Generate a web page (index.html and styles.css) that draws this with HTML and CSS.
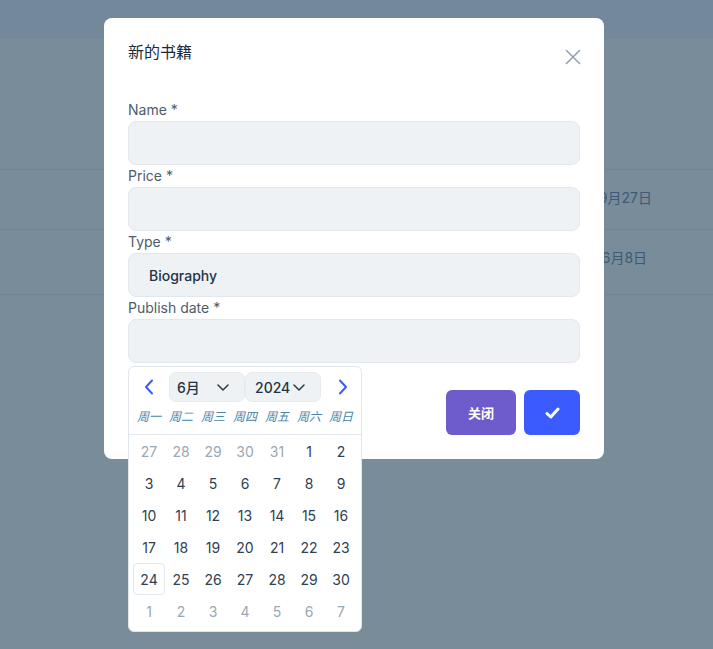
FILE: index.html
```html
<!DOCTYPE html>
<html lang="zh">
<head>
    <meta charset="UTF-8">
    <meta name="viewport" content="width=device-width, initial-scale=1.0">
    <title>新的书籍</title>
    <link rel="stylesheet" href="styles.css">
</head>
<body>

<!-- ===== PAGE BEHIND THE MODAL (dimmed) ===== -->
<div class="page">
    <div class="topbar"></div>
    <div class="book-table">
        <div class="book-row book-head"></div>
        <div class="book-row"><span class="book-date">2019年9月27日</span></div>
        <div class="book-row tall"><span class="book-date">2024年6月8日</span></div>
    </div>
</div>

<!-- ===== NEW BOOK MODAL ===== -->
<div class="modal">
    <div class="modal-card">
        <div class="modal-head">
            <h2 class="modal-title">新的书籍</h2>
            <button class="close-btn" aria-label="close">
                <svg width="16" height="16" viewBox="0 0 16 16"><path d="M1.5 1.5 L14.5 14.5 M14.5 1.5 L1.5 14.5" stroke="#93a2ae" stroke-width="1.6" fill="none" stroke-linecap="round"/></svg>
            </button>
        </div>

        <div class="field">
            <label>Name *</label>
            <div class="input"></div>
        </div>
        <div class="field">
            <label>Price *</label>
            <div class="input"></div>
        </div>
        <div class="field">
            <label>Type *</label>
            <div class="input select-input">Biography</div>
        </div>
        <div class="field date-field">
            <label>Publish date *</label>
            <div class="input"></div>

            <!-- date picker dropdown -->
            <div class="datepicker">
                <div class="dp-nav">
                    <button class="dp-arrow">
                        <svg width="10" height="16" viewBox="0 0 10 16"><path d="M8 1.5 L2 8 L8 14.5" stroke="#3b5bff" stroke-width="2" fill="none" stroke-linecap="round" stroke-linejoin="round"/></svg>
                    </button>
                    <div class="dp-select month">6月
                        <svg width="12" height="7" viewBox="0 0 12 7"><path d="M1 1 L6 6 L11 1" stroke="#2b3b4b" stroke-width="1.5" fill="none" stroke-linecap="round" stroke-linejoin="round"/></svg>
                    </div>
                    <div class="dp-select year">2024
                        <svg width="12" height="7" viewBox="0 0 12 7"><path d="M1 1 L6 6 L11 1" stroke="#2b3b4b" stroke-width="1.5" fill="none" stroke-linecap="round" stroke-linejoin="round"/></svg>
                    </div>
                    <button class="dp-arrow">
                        <svg width="10" height="16" viewBox="0 0 10 16"><path d="M2 1.5 L8 8 L2 14.5" stroke="#3b5bff" stroke-width="2" fill="none" stroke-linecap="round" stroke-linejoin="round"/></svg>
                    </button>
                </div>
                <div class="dp-weekdays" id="weekdays"></div>
                <div class="dp-days" id="days"></div>
            </div>
        </div>

        <div class="modal-foot">
            <button class="btn btn-close">关闭</button>
            <button class="btn btn-ok">
                <svg width="15" height="12" viewBox="0 0 15 12"><path d="M2 6.5 L5.8 10 L13 2" stroke="#ffffff" stroke-width="3" fill="none" stroke-linecap="round" stroke-linejoin="round"/></svg>
            </button>
        </div>
    </div>
</div>

<script>
    const WEEKDAYS = ['周一', '周二', '周三', '周四', '周五', '周六', '周日'];

    // June 2024 starts on a Saturday, grid starts Monday May 27
    function renderCalendar() {
        const weekdays = document.getElementById('weekdays');
        WEEKDAYS.forEach(name => {
            const span = document.createElement('span');
            span.textContent = name;
            weekdays.appendChild(span);
        });

        const days = document.getElementById('days');
        const start = new Date(2024, 4, 27);
        for (let i = 0; i < 42; i++) {
            const d = new Date(start);
            d.setDate(start.getDate() + i);
            const cell = document.createElement('span');
            cell.className = 'dp-day';
            if (d.getMonth() !== 5) cell.classList.add('muted');
            if (d.getMonth() === 5 && d.getDate() === 24) cell.classList.add('today');
            cell.textContent = d.getDate();
            days.appendChild(cell);
        }
    }

    renderCalendar();
</script>

</body>
</html>
```

FILE: styles.css
```css
:root {
    --text: #1f3346;
    --label: #4b5d6d;
    --input-bg: #eef2f5;
    --input-border: #e2e8ee;
    --blue: #3b5bff;
    --purple: #6e5ccc;
    --font-family: Inter, "Noto Sans CJK SC", "Noto Sans", sans-serif;
}
* {
    box-sizing: border-box;
}
body {
    margin: 0;
    font-family: var(--font-family);
    color: var(--text);
    background-color: #788c9a;
    height: 649px;
    overflow: hidden;
}

/* ----- dimmed page ----- */
.topbar {
    height: 39px;
    background-color: #73889a;
}
.book-row {
    height: 60px;
    border-bottom: 1px solid #6f8494;
    display: flex;
    align-items: center;
    padding: 0 0 6px 553px;
}
.book-head {
    height: 131px;
}
.book-row.tall {
    height: 65px;
    padding-bottom: 10px;
}
.book-date {
    font-size: 14px;
    color: #3e5a74;
}

/* ----- modal ----- */
.modal {
    position: absolute;
    top: 0;
    left: 0;
    right: 0;
    display: flex;
    justify-content: center;
    padding: 18px 5px 0 0;
}
.modal-card {
    width: 500px;
    background: #ffffff;
    border-radius: 8px;
    padding: 22px 24px 24px;
}
.modal-head {
    display: flex;
    justify-content: space-between;
    align-items: flex-start;
    height: 59px;
}
.modal-title {
    margin: 0;
    font-size: 16px;
    font-weight: 400;
    line-height: 24px;
    color: #1b2b3b;
}
.close-btn {
    border: none;
    background: none;
    padding: 0;
    margin: 9px -1px 0 0;
    width: 16px;
    height: 16px;
    cursor: pointer;
}
.field label {
    display: block;
    font-size: 14px;
    line-height: 22px;
    color: var(--label);
}
.input {
    height: 44px;
    background-color: var(--input-bg);
    border: 1px solid var(--input-border);
    border-radius: 8px;
}
.select-input {
    display: flex;
    align-items: center;
    padding-left: 20px;
    font-size: 14px;
    font-weight: 500;
    color: var(--text);
}
.date-field {
    position: relative;
}

/* ----- date picker ----- */
.datepicker {
    position: absolute;
    top: 69px;
    left: 0;
    width: 234px;
    background: #ffffff;
    border: 1px solid #dfe5eb;
    border-radius: 6px;
    z-index: 5;
}
.dp-nav {
    display: flex;
    align-items: center;
    padding-top: 5px;
}
.dp-arrow {
    width: 40px;
    height: 30px;
    border: none;
    background: none;
    padding: 0;
    display: flex;
    align-items: center;
    justify-content: center;
    cursor: pointer;
}
.dp-arrow:last-child {
    width: 40px;
    padding-left: 4px;
}
.dp-select {
    width: 76px;
    height: 30px;
    background: var(--input-bg);
    border: 1px solid #e6ebf0;
    border-radius: 7px;
    display: flex;
    align-items: center;
    justify-content: space-between;
    font-size: 14px;
    font-weight: 500;
    color: var(--text);
}
.dp-select.month {
    padding: 0 15px 0 7px;
}
.dp-select.year {
    padding: 0 15px 0 9px;
}
.dp-weekdays {
    display: grid;
    grid-template-columns: repeat(7, 32px);
    padding: 3px 4px 0;
    height: 33px;
    border-bottom: 1px solid #e3e8ee;
}
.dp-weekdays span {
    text-align: center;
    font-size: 12px;
    line-height: 24px;
    font-style: italic;
    color: #4585a8;
}
.dp-days {
    display: grid;
    grid-template-columns: repeat(7, 32px);
    grid-auto-rows: 32px;
    padding: 0 4px 4px;
}
.dp-day {
    display: flex;
    align-items: center;
    justify-content: center;
    font-size: 14px;
    color: #2e4052;
    border-radius: 4px;
}
.dp-day.muted {
    color: #9ba7b2;
}
.dp-day.today {
    border: 1px solid #e2e8ef;
}

/* ----- footer ----- */
.modal-foot {
    display: flex;
    justify-content: flex-end;
    gap: 8px;
    margin-top: 27px;
}
.btn {
    height: 45px;
    border: none;
    border-radius: 6px;
    color: #ffffff;
    font-family: var(--font-family);
    font-size: 13px;
    font-weight: 700;
    cursor: pointer;
    display: flex;
    align-items: center;
    justify-content: center;
}
.btn-close {
    width: 70px;
    background-color: var(--purple);
}
.btn-ok {
    width: 56px;
    background-color: var(--blue);
}
```
